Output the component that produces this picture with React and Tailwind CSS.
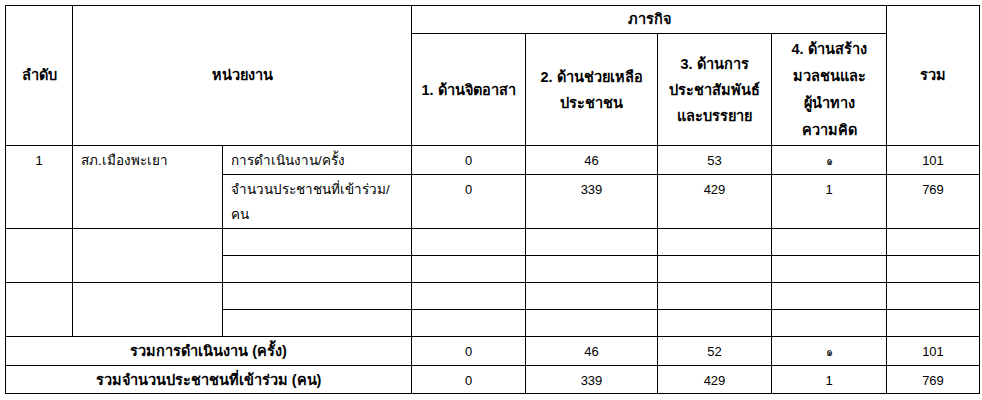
import React from "react";

const cell = "border border-black align-top px-2 pt-[2px] leading-[25px]";
const num = `${cell} text-center text-[13px]`;
const th = "border border-black font-bold text-[14.5px]";

const EmptyGroup = () => (
  <>
    <tr className="h-[27px]">
      <td rowSpan={2} className={cell}></td>
      <td rowSpan={2} className={cell}></td>
      {[0, 1, 2, 3, 4, 5].map((i) => (
        <td key={i} className={cell}></td>
      ))}
    </tr>
    <tr className="h-[27px]">
      {[0, 1, 2, 3, 4, 5].map((i) => (
        <td key={i} className={cell}></td>
      ))}
    </tr>
  </>
);

// thai numeral renders large in the fallback font, shrink it a bit
const Val = ({ v }) =>
  v === "๑" ? <span className="text-[11px]">{v}</span> : v;

const App = () => {
  return (
    <div
      className="bg-white w-[982px] h-[400px] pt-[5px] pl-[5px] text-[13.5px] text-black"
      style={{ fontFamily: '"Liberation Sans", sans-serif' }}
    >
      <table className="table-fixed border-collapse w-[974px]">
        <colgroup>
          <col className="w-[67px]" />
          <col className="w-[150px]" />
          <col className="w-[189px]" />
          <col className="w-[114px]" />
          <col className="w-[132px]" />
          <col className="w-[114px]" />
          <col className="w-[115px]" />
          <col className="w-[93px]" />
        </colgroup>
        <thead>
          {/* header */}
          <tr className="h-[28px]">
            <th rowSpan={2} className={th}>
              ลำดับ
            </th>
            <th rowSpan={2} colSpan={2} className={th}>
              หน่วยงาน
            </th>
            <th colSpan={4} className={th}>
              ภารกิจ
            </th>
            <th rowSpan={2} className={th}>
              รวม
            </th>
          </tr>
          <tr className="h-[112px]">
            <th className={`${th} leading-[26px] px-1`}>1. ด้านจิตอาสา</th>
            <th className={`${th} leading-[26px] px-1`}>
              2. ด้านช่วยเหลือ
              <br />
              ประชาชน
            </th>
            <th className={`${th} leading-[26px] px-1`}>
              3. ด้านการ
              <br />
              ประชาสัมพันธ์
              <br />
              และบรรยาย
            </th>
            <th className={`${th} leading-[27px] px-1`}>
              4. ด้านสร้าง
              <br />
              มวลชนและ
              <br />
              ผู้นำทาง
              <br />
              ความคิด
            </th>
          </tr>
        </thead>
        <tbody>
          {/* data */}
          <tr className="h-[28px]">
            <td rowSpan={2} className={num}>
              1
            </td>
            <td rowSpan={2} className={cell}>
              สภ.เมืองพะเยา
            </td>
            <td className={cell}>การดำเนินงาน/ครั้ง</td>
            {["0", "46", "53", "๑", "101"].map((v, i) => (
              <td key={i} className={num}>
                <Val v={v} />
              </td>
            ))}
          </tr>
          <tr className="h-[54px]">
            <td className={cell}>
              จำนวนประชาชนที่เข้าร่วม/
              <br />
              คน
            </td>
            {["0", "339", "429", "1", "769"].map((v, i) => (
              <td key={i} className={num}>
                {v}
              </td>
            ))}
          </tr>
          <EmptyGroup />
          <EmptyGroup />
          {/* totals */}
          <tr className="h-[28px]">
            <td colSpan={3} className={`${cell} text-center font-bold text-[14.5px]`}>
              รวมการดำเนินงาน (ครั้ง)
            </td>
            {["0", "46", "52", "๑", "101"].map((v, i) => (
              <td key={i} className={num}>
                <Val v={v} />
              </td>
            ))}
          </tr>
          <tr className="h-[28px]">
            <td colSpan={3} className={`${cell} text-center font-bold text-[14.5px]`}>
              รวมจำนวนประชาชนที่เข้าร่วม (คน)
            </td>
            {["0", "339", "429", "1", "769"].map((v, i) => (
              <td key={i} className={num}>
                {v}
              </td>
            ))}
          </tr>
        </tbody>
      </table>
    </div>
  );
};

export default App;
